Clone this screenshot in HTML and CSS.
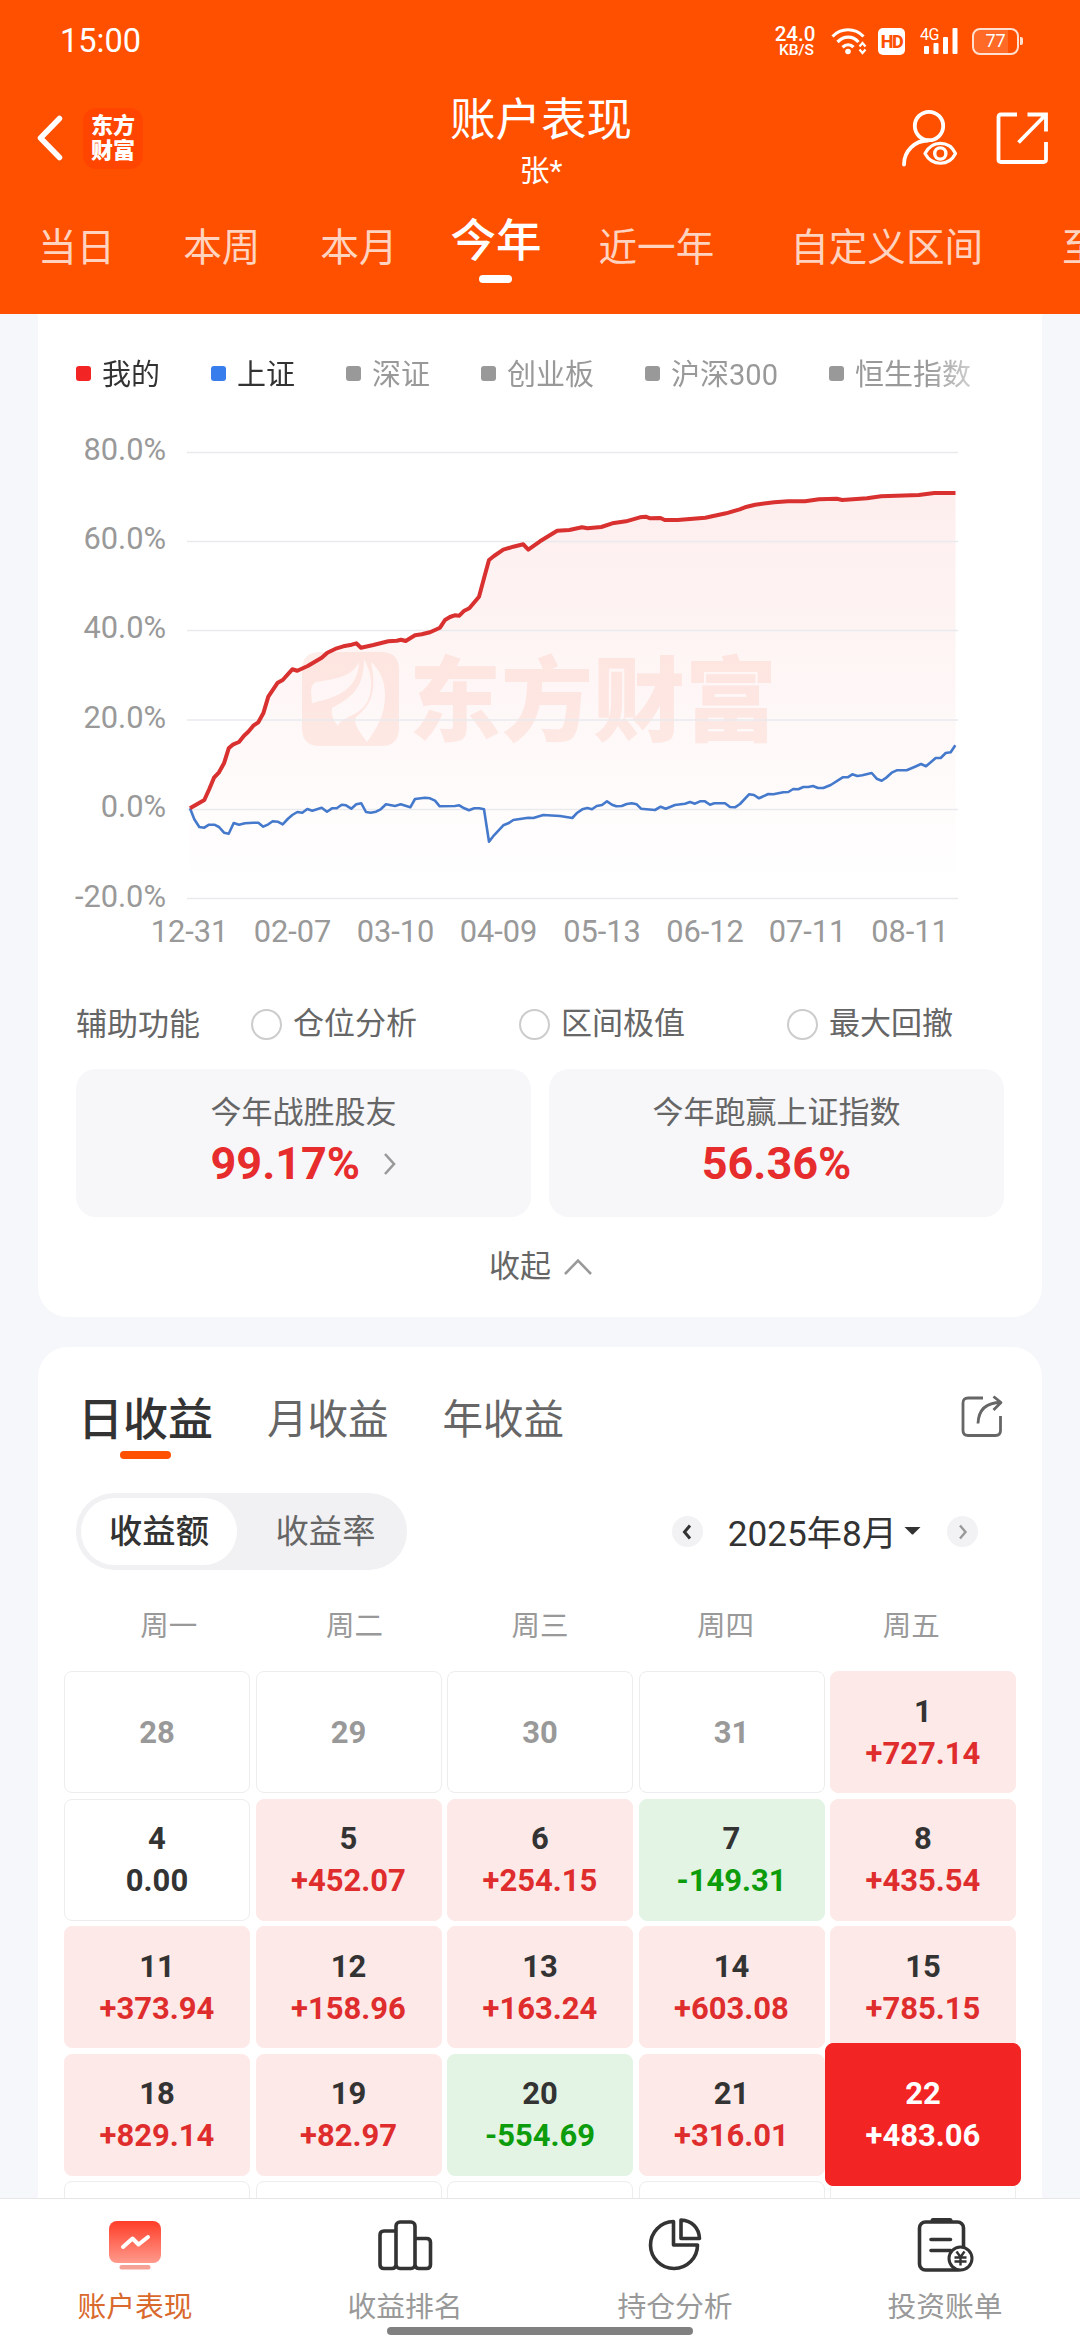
FILE: index.html
```html
<!DOCTYPE html>
<html lang="zh-CN">
<head>
<meta charset="utf-8">
<title>账户表现</title>
<link rel="stylesheet" href="styles.css">
</head>
<body>
<div class="screen">
  <header class="header">
    <div class="status">
      <span class="clock">15:00</span>
      <div class="status-icons">
        <div class="speed"><b>24.0</b><span>KB/S</span></div>
        <svg class="wifi" width="36" height="28" viewBox="0 0 36 28" fill="none" stroke="#fff" stroke-width="3.2">
          <path d="M1.5 9.5C10 .5 24 .5 32.500 9.500"/><path d="M6.500 15C13 8.500 21.500 8.500 27.500 15"/><path d="M11.500 20.200C15 17 19.500 17 22.500 20.200"/>
          <circle cx="17" cy="24.500" r="2.800" fill="#fff" stroke="none"/>
          <path d="M28.500 19.500l3-3.500 3 3.500M28.500 22.500l3 3.500 3-3.500" stroke-width="2.200"/>
        </svg>
        <span class="hd">HD</span>
        <div class="signal"><span>4G</span>
          <svg width="39" height="28" viewBox="0 0 39 28" fill="#fff"><rect x="4" y="19" width="5" height="8" rx="1"/><rect x="13.500" y="16" width="5" height="11" rx="1"/><rect x="23" y="10" width="5" height="17" rx="1"/><rect x="32.500" y="1" width="5" height="26" rx="1"/></svg>
        </div>
        <div class="battery"><span>77</span></div>
      </div>
    </div>
    <div class="titlebar">
      <div class="title-left">
        <svg width="26" height="46" viewBox="0 0 26 46" fill="none" stroke="#fff" stroke-width="5.500" stroke-linecap="round" stroke-linejoin="round"><path d="M22.500 3.500L3.500 23l19 19.500"/></svg>
        <div class="logo"><span>东方</span><span>财富</span></div>
      </div>
      <div class="title-center"><h1>账户表现</h1><p>张*</p></div>
      <div class="title-right">
        <svg width="57" height="58" viewBox="0 0 57 58" fill="none" stroke="#fff" stroke-width="3.800" stroke-linecap="round">
          <circle cx="28" cy="17" r="14.200"/><path d="M3 55.500C3 42 14 31.500 27 31.500"/>
          <path d="M24 44.500C31 31 48 31 54.500 44.500C48 57.500 31 57.500 24 44.500Z" stroke-linejoin="round" stroke-width="3.200"/><circle cx="39.300" cy="44.500" r="5.600" stroke-width="3.400"/>
        </svg>
        <svg width="53" height="54" viewBox="0 0 53 54" fill="none" stroke="#fff" stroke-width="3.800">
          <path d="M21 3.500H5Q2.500 3.500 2.500 6V48.500Q2.500 51 5 51H47.500Q50 51 50 48.500V31"/><path d="M31.500 3.500H50V20.500M49.500 4L22.500 31.500"/>
        </svg>
      </div>
    </div>
    <nav class="ranges">
      <span>当日</span><span class="r2">本周</span><span class="r3">本月</span><span class="r4 active">今年</span><span class="r5">近一年</span><span class="r6">自定义区间</span><span class="r7">至今</span>
    </nav>
  </header>

  <main class="content">
    <section class="card card-chart">
      <div class="legend">
        <span class="on"><i class="red"></i>我的</span><span class="on"><i class="blue"></i>上证</span><span><i></i>深证</span><span><i></i>创业板</span><span><i></i>沪深300</span><span><i></i>恒生指数</span>
      </div>
      <svg class="chart" width="1004" height="520" viewBox="38 430 1004 520">
        <defs><linearGradient id="area" gradientUnits="userSpaceOnUse" x1="0" y1="493" x2="0" y2="890"><stop offset="0" stop-color="#f02c2c" stop-opacity=".08"/><stop offset="1" stop-color="#f02c2c" stop-opacity="0"/></linearGradient></defs>
        <g class="watermark">
          <path fill-rule="evenodd" d="M320 652H381Q399 652 399 670V728Q399 746 381 746H320Q302 746 302 728V670Q302 652 320 652ZM359 662C352 677 335 679 316 682Q311 684 311 692L312 703C340 697 358 688 359 662ZM364 659C364 690 350 698 332 708C331 716 334 721 338 726C343 713 373 718 371 680C370 671 367 665 364 659ZM371 662C377 690 372 705 356 717C353 725 360 732 367 742C377 728 385 715 385 695C385 680 379 669 371 662Z"/>
          <text x="409" y="734">东方财富</text>
        </g>
        <path fill="url(#area)" d="M190 808.300L204.300 800 209.300 789 214 777.700 219 772.300 224 763.300 228.700 748.300 233.300 744.300 239 742 244 735.700 248.300 731.700 253.300 725.700 258.300 722.300 263.300 713.300 268.300 696.700 277.700 682.700 282.700 680 292.300 669.300 297.300 670.700 307.700 666 321.700 657.700 327.300 652.700 336.700 648.300 356.300 643.300 361 647.700 388.300 641.300 405.700 641 415 635.300 430 632.300 440 627.700 445 620 454.700 615.300 459.300 615.700 464.300 610.700 469.300 608.300 479 596.700 489 560 494 556 503.300 549.700 523.300 544.300 528.300 549.700 540 541.300 557.200 530.700 582 527.300 601.300 527 612.300 523.300 626 521.300 645.700 516.700 664.700 520 677.700 520 705.300 517.700 726 513.300 744.900 507.300 774.200 502.300 805 501.300 836.800 498.700 867 498.300 918.800 495 934.300 493 955.500 493V898H190Z"/>
        <path class="grid" d="M187 452.500H958M187 541.500H958M187 630.500H958M187 720H958M187 809.500H958M187 898.500H958"/>
        <polyline class="line-sse" points="190,808.3 194.3,819.3 199.3,827 204.3,827.7 209,824.7 214.3,824.7 219,827 224,832.7 228.7,833.7 233.7,823 239,824.7 245,823.3 253.3,822.7 258.3,822.7 263.3,826.7 268.3,824.3 272.7,821.3 277.7,821.7 282.7,824.3 287.7,819 292.3,815 297.3,812 302.3,812.7 307.3,809 312.3,810.7 321.7,807.7 327,811.7 332,808.3 336.7,808.3 341.7,804.7 346,805.3 351.3,808.7 356.3,804.3 361.3,803.3 366,812 370.7,812.7 376,811.7 380.7,809.3 386,804.3 395,806 400.7,804.3 410.3,807.3 415,799 425,797.7 430,798.3 435,800.7 439.7,806.3 455,806 459.3,805.3 464.3,808.3 469,810.3 474.3,808.3 479.3,808.3 484,809.3 489,841.7 494,835.3 503.3,825.3 508.3,823.3 513.3,820 528.3,817.7 533.3,818 543.3,815 560,816 572.3,818 577.3,812.7 582.3,809.3 587.3,808 592,809.3 596.7,806 602,805 607,801.3 612,804.7 616.3,806.3 621.7,806 626.7,804 631.7,803.3 636.7,804.3 641,808.7 655,810 660.7,806.7 665.7,808.7 675,805 685,803.7 690,802 695,803.7 700,801.3 705,801.3 710,804.7 714.3,803.3 725,803.3 730,807 735,807.3 740,804 749,794.3 754,795 759,798.3 768.3,794 773.3,794.3 783.3,792.3 788.3,792 793.3,789 798.3,789.3 803.3,787 808.3,787 813,786 818,788 823.3,788 830.7,785 842.7,777.3 847.7,777.3 852.3,774.3 857.3,776 862.3,775.3 871.7,773 876.7,778.7 881.7,780.7 886.7,777.3 891.7,772.7 896.7,770.3 906.7,770.3 915,766.7 921,764 926,766.3 935.7,758 940.7,758 945.7,753 950.7,752.3 955.3,745.3"/>
        <polyline class="line-mine" points="190,808.3 204.3,800 209.3,789 214,777.7 219,772.3 224,763.3 228.7,748.3 233.3,744.3 239,742 244,735.7 248.3,731.7 253.3,725.7 258.3,722.3 263.3,713.3 268.3,696.7 277.7,682.7 282.7,680 292.3,669.3 297.3,670.7 307.7,666 321.7,657.7 327.3,652.7 336.7,648.3 343.3,646.3 351.7,644.7 356.3,643.3 361,647.7 373.3,645 388.3,641.3 396.7,640.7 401,639.7 405.7,641 415,635.3 421.7,634.3 430,632.3 440,627.7 445,620 450,617 454.7,615.3 459.3,615.7 464.3,610.7 469.3,608.3 479,596.7 484,578.3 489,560 494,556 503.3,549.7 513.3,546.7 523.3,544.3 528.3,549.7 540,541.3 557.2,530.7 569.3,530 582,527.3 587.5,528.3 601.3,527 612.3,523.3 626,521.3 639.9,517.3 645.7,516.7 650.2,518.3 660.5,518 664.7,520 677.7,520 705.3,517.7 726,513.3 739.7,509.3 744.9,507.3 755.2,504.7 774.2,502.3 788,501.3 805,501.3 819,499.3 836.8,498.7 842.3,500 867,498.3 881,496.3 918.8,495 934.3,493 955.5,493"/>
        <g class="axis" text-anchor="end"><text x="166" y="460">80.0%</text><text x="166" y="549">60.0%</text><text x="166" y="638">40.0%</text><text x="166" y="728">20.0%</text><text x="166" y="817">0.0%</text><text x="166" y="907">-20.0%</text></g>
        <g class="axis" text-anchor="middle"><text x="189.500" y="942">12-31</text><text x="292.500" y="942">02-07</text><text x="395.500" y="942">03-10</text><text x="498.500" y="942">04-09</text><text x="602" y="942">05-13</text><text x="705" y="942">06-12</text><text x="807.500" y="942">07-11</text><text x="910" y="942">08-11</text></g>
      </svg>
      <div class="helpers"><b>辅助功能</b><span><i></i>仓位分析</span><span><i></i>区间极值</span><span><i></i>最大回撤</span></div>
      <div class="stats">
        <div class="stat"><div class="stat-body"><p>今年战胜股友</p><strong>99.17%<svg width="14" height="24" viewBox="0 0 14 24" fill="none" stroke="#999" stroke-width="2.600"><path d="M2 2l9 10-9 10"/></svg></strong></div></div>
        <div class="stat"><div class="stat-body center"><p>今年跑赢上证指数</p><strong>56.36%</strong></div></div>
      </div>
      <div class="fold">收起<svg width="30" height="18" viewBox="0 0 30 18" fill="none" stroke="#999" stroke-width="2.600"><path d="M2 16L15 2.500 28 16"/></svg></div>
    </section>

    <section class="card card-calendar">
      <div class="cal-tabs">
        <span class="active">日收益</span><span>月收益</span><span>年收益</span>
        <svg width="42" height="43" viewBox="0 0 42 43" fill="none" stroke="#666" stroke-width="2.800" stroke-linejoin="round"><path d="M22 3H7Q2 3 2 8V35.500Q2 40.500 7 40.500H34.500Q39.500 40.500 39.500 35.500V21"/><path d="M17 28.500C17.500 16 24 7.500 40 7.500M32.500 1.500L40 7.500 32.500 15"/></svg>
      </div>
      <div class="cal-tools">
        <div class="toggle"><span class="active">收益额</span><span>收益率</span></div>
        <div class="month">
          <i class="round dark"><svg width="10" height="16" viewBox="0 0 10 16" fill="none" stroke="#333" stroke-width="3"><path d="M8 1.500L2.500 8 8 14.500"/></svg></i>
          <span>2025年8月</span>
          <svg class="caret" width="17" height="8" viewBox="0 0 17 8"><path d="M.5 0H16.500L9.500 7Q8.500 8 7.500 7Z" fill="#333"/></svg>
          <i class="round"><svg width="10" height="16" viewBox="0 0 10 16" fill="none" stroke="#999" stroke-width="2.400"><path d="M2 1.500L7.500 8 2 14.500"/></svg></i>
        </div>
      </div>
      <div class="week"><span>周一</span><span>周二</span><span>周三</span><span>周四</span><span>周五</span></div>
      <div class="days">
        <div class="day out">28</div><div class="day out">29</div><div class="day out">30</div><div class="day out">31</div><div class="day up">1<em>+727.14</em></div>
        <div class="day">4<em>0.00</em></div><div class="day up">5<em>+452.07</em></div><div class="day up">6<em>+254.15</em></div><div class="day down">7<em>-149.31</em></div><div class="day up">8<em>+435.54</em></div>
        <div class="day up">11<em>+373.94</em></div><div class="day up">12<em>+158.96</em></div><div class="day up">13<em>+163.24</em></div><div class="day up">14<em>+603.08</em></div><div class="day up">15<em>+785.15</em></div>
        <div class="day up">18<em>+829.14</em></div><div class="day up">19<em>+82.97</em></div><div class="day down">20<em>-554.69</em></div><div class="day up">21<em>+316.01</em></div><div class="day selected">22<em>+483.06</em></div>
        <div class="day"></div><div class="day"></div><div class="day"></div><div class="day"></div><div class="day"></div>
      </div>
    </section>
  </main>

  <footer class="tabbar">
    <div class="tab active">
      <svg width="60" height="60" viewBox="0 0 60 60"><defs><linearGradient id="tv" x1="0" y1="0" x2="0" y2="1"><stop offset="0" stop-color="#ff3d28"/><stop offset="1" stop-color="#ff9a8c"/></linearGradient></defs><rect x="4" y="6" width="52" height="42" rx="8" fill="url(#tv)"/><rect x="14.500" y="50" width="31" height="4.500" rx="2" fill="#f5a196"/><path d="M18 32L27.500 23.500 33.500 29.500 43 22" fill="none" stroke="#fff" stroke-width="4" stroke-linecap="round" stroke-linejoin="round"/></svg>
      <span>账户表现</span></div>
    <div class="tab">
      <svg width="60" height="60" viewBox="0 0 60 60" fill="none" stroke="#333" stroke-width="3.600" stroke-linejoin="round"><path d="M20 16H9Q5 16 5 20V49.500Q5 53.500 9 53.500H17Q20.500 53.500 21 50"/><rect x="21" y="7" width="19" height="46.500" rx="4"/><path d="M40 23.500H51.500Q55.500 23.500 55.500 27.500V49.500Q55.500 53.500 51.500 53.500H44Q40.500 53.500 40 50"/></svg>
      <span>收益排名</span></div>
    <div class="tab">
      <svg width="60" height="60" viewBox="0 0 60 60" fill="none" stroke="#333" stroke-width="3.600" stroke-linejoin="round"><path d="M28.500 6.500A23.500 23.500 0 1 0 52.500 30H28.500Z"/><path d="M36 5V23.500H54.500C54 13 47 5.500 36 5Z"/></svg>
      <span>持仓分析</span></div>
    <div class="tab">
      <svg width="60" height="60" viewBox="0 0 60 60" fill="none" stroke="#333" stroke-width="3.600"><rect x="4.500" y="7" width="44" height="48" rx="6"/><path d="M18 5.500H35" stroke-width="5" stroke-linecap="round"/><path d="M16 24.500H35.500M16 35.500H35.500" stroke-linecap="round"/><circle cx="45.500" cy="43.500" r="11.500" fill="#fff" stroke-width="3"/><path d="M41.500 36.500L45.500 42 49.500 36.500M45.500 42V50.500M39.500 42.500H51.500M39.500 46.500H51.500" stroke-width="2.400"/></svg>
      <span>投资账单</span></div>
    <i class="home"></i>
  </footer>
</div>
</body>
</html>
```
FILE: styles.css
```css
* { box-sizing: border-box; margin: 0; padding: 0; }
body { background: #f6f7fa; font-family: Roboto, "Noto Sans CJK SC", sans-serif; color: #333; }
i, em { font-style: normal; }
svg { display: block; flex: none; }
.screen { width: 1080px; height: 2340px; display: flex; flex-direction: column; overflow: hidden; }

.header { flex: none; height: 314px; background: #ff5000; color: #fff; overflow: hidden; }
.status { height: 93px; display: flex; justify-content: space-between; padding: 26px 61px 0 60px; }
.clock { font-size: 32.500px; line-height: 30px; }
.status-icons { display: flex; height: 30px; align-items: center; }
.speed { width: 42px; display: flex; flex-direction: column; align-items: center; font-weight: 500; }
.speed b { font-size: 20.500px; line-height: 18px; font-weight: 500; }
.speed span { font-size: 15.500px; line-height: 14px; padding-left: 3px; }
.wifi { margin-left: 15px; }
.hd { width: 27px; height: 27px; margin-left: 11px; border-radius: 5px; background: #fff; color: #ff5000; font-size: 18px; line-height: 27px; font-weight: 800; text-align: center; letter-spacing: -1.500px; }
.signal { position: relative; margin-left: 15px; }
.signal span { position: absolute; left: 0; top: 1px; font-size: 16px; line-height: 14px; letter-spacing: -.5px; }
.battery { position: relative; width: 47px; height: 27px; margin-left: 13px; border: 2.500px solid #ffe0d0; border-radius: 8px; text-align: center; font-size: 18px; line-height: 22px; background: linear-gradient(90deg, rgba(255,255,255,.15) 80%, transparent 80%); }
.battery::after { content: ""; position: absolute; right: -6px; top: 7px; width: 3px; height: 8px; border-radius: 0 2px 2px 0; background: #ffe0d0; }

.titlebar { height: 90px; display: grid; grid-template-columns: 1fr auto 1fr; grid-template-rows: 90px; padding: 0 31px 0 37px; }
.title-left { display: flex; align-items: center; gap: 20px; }
.logo { width: 60px; height: 61px; border-radius: 13px; background: #ff4500; padding-top: 5px; font-size: 22px; line-height: 25px; font-weight: 900; text-align: center; }
.logo span { display: block; }
.title-center { text-align: center; padding-top: 2px; margin-right: 4px; }
.title-center h1 { font-size: 45.500px; line-height: 52px; font-weight: 400; }
.title-center p { font-size: 30px; line-height: 38px; margin-top: 5px; }
.title-right { display: flex; justify-content: flex-end; align-items: center; gap: 38px; }

.ranges { display: flex; padding: 40px 0 0 38px; font-size: 38.600px; line-height: 50px; color: #ffd3bf; white-space: nowrap; }
.ranges span { flex: none; }
.r2 { margin-left: 68px; }
.r3 { margin-left: 60px; }
.r4 { margin-left: 53px; }
.r5 { margin-left: 57px; }
.r6 { margin-left: 76px; }
.r7 { margin-left: 79px; }
.ranges .active { position: relative; margin-top: -6px; font-size: 45.500px; font-weight: 500; color: #fff; }
.ranges .active::after { content: ""; position: absolute; left: 29px; top: 58px; width: 33px; height: 8px; border-radius: 4px; background: #fff; }

.content { flex: 1; min-height: 0; overflow: hidden; padding: 0 38px; display: flex; flex-direction: column; gap: 30px; }
.card { flex: none; background: #fff; border-radius: 30px; }
.card-chart { height: 1003px; border-top-left-radius: 0; border-top-right-radius: 0; padding-top: 45px; }
.legend { display: flex; gap: 51px; padding-left: 38px; height: 32px; width: 940px; overflow: hidden; font-size: 29px; line-height: 32px; color: #999; white-space: nowrap; -webkit-mask-image: linear-gradient(90deg, #000 890px, rgba(0,0,0,.45) 935px); mask-image: linear-gradient(90deg, #000 890px, rgba(0,0,0,.45) 935px); }
.legend span { display: flex; align-items: center; gap: 11px; }
.legend i { width: 15px; height: 15px; border-radius: 3px; background: #999; margin-top: -4px; }
.legend .on { color: #333; }
.legend .red { background: #f32424; }
.legend .blue { background: #377dec; }
.chart { margin-top: 39px; }
.grid { stroke: #e9eaee; stroke-width: 1.500; fill: none; }
.line-sse { fill: none; stroke: #4479cb; stroke-width: 2.600; stroke-linejoin: round; }
.line-mine { fill: none; stroke: #d93030; stroke-width: 4; stroke-linejoin: round; }
.axis { font-size: 30.800px; fill: #999; }
.watermark { fill: #feeee9; font-size: 92px; font-weight: 900; }
.helpers { display: flex; align-items: center; height: 32px; margin: 58px 0 0 38px; font-size: 31px; line-height: 32px; color: #666; }
.helpers b { font-weight: 400; width: 175px; flex: none; padding-top: 2px; }
.helpers span { display: flex; align-items: center; flex: none; width: 268px; gap: 11px; }
.helpers i { width: 31px; height: 31px; border: 2.500px solid #ccc; border-radius: 50%; }
.stats { display: grid; grid-template-columns: 1fr 1fr; gap: 18px; padding: 0 38px; margin-top: 29px; }
.stat { height: 148px; background: #f7f7fa; border-radius: 20px; display: flex; justify-content: center; padding-top: 25px; }
.stat p { font-size: 31px; line-height: 38px; color: #666; }
.stat strong { display: flex; align-items: center; justify-content: space-between; font-size: 45px; line-height: 52px; margin-top: 6px; font-weight: 700; color: #e62c2c; }
.stat .center { text-align: center; }
.stat .center strong { justify-content: center; }
.fold { display: flex; justify-content: center; align-items: center; gap: 12px; margin-top: 30px; padding-left: 2px; font-size: 31px; line-height: 40px; color: #666; }

.card-calendar { height: 920px; padding-top: 39px; }
.cal-tabs { display: flex; align-items: center; height: 60px; padding: 0 39px 0 40px; font-size: 40.500px; color: #666; }
.cal-tabs span { margin-right: 54px; }
.cal-tabs .active { position: relative; font-size: 45px; font-weight: 500; color: #333; margin-right: 54px; }
.cal-tabs .active::after { content: ""; position: absolute; left: 42px; bottom: -10px; width: 51px; height: 8px; border-radius: 4px; background: #ff5000; }
.cal-tabs svg { margin-left: auto; }
.cal-tools { display: flex; align-items: center; justify-content: space-between; height: 77px; margin: 47px 64px 0 38px; }
.toggle { display: flex; width: 331px; height: 77px; padding: 5px; border-radius: 38px; background: #f1f1f4; font-size: 33.300px; line-height: 68px; color: #666; text-align: center; }
.toggle span { flex: none; width: 177px; }
.toggle .active { width: 156px; height: 67px; background: #fff; border-radius: 34px; color: #333; font-weight: 500; }
.month { display: flex; align-items: center; font-size: 35.200px; }
.month span { margin: -3px 0 0 25px; }
.caret { margin: -2px 26px 0 7px; }
.round { width: 31px; height: 31px; border-radius: 50%; background: #f2f2f4; display: flex; align-items: center; justify-content: center; }
.week { display: grid; grid-template-columns: repeat(5, 1fr); margin: 37px 38px 0; text-align: center; font-size: 28.500px; line-height: 40px; color: #999; }
.days { display: grid; grid-template-columns: repeat(5, 186px); grid-auto-rows: 122px; justify-content: space-between; row-gap: 5.600px; margin: 24px 26px 0; }
.day { border: 1.500px solid #ededed; border-radius: 8px; display: flex; flex-direction: column; align-items: center; justify-content: center; padding-top: 1px; font-size: 31px; line-height: 42px; font-weight: 700; }
.out { color: #999; }
.up { background: #fde9e8; border-color: #fde9e8; }
.up em { color: #df2d2d; }
.down { background: #e3f4e4; border-color: #e3f4e4; }
.down em { color: #0c9c0c; }
.selected { z-index: 1; margin: -11px -5px -10px; background: #f32424; border-color: #f32424; color: #fff; }

.tabbar { flex: none; position: relative; height: 142px; display: grid; grid-template-columns: repeat(4, 1fr); background: #fff; border-top: 1px solid #e6e6e6; }
.tab { display: flex; flex-direction: column; align-items: center; padding-top: 16px; font-size: 28.800px; line-height: 36px; color: #999; }
.tab span { margin-top: 14px; }
.tab.active { color: #d9692c; }
.home { position: absolute; left: 387px; bottom: 5px; width: 306px; height: 8px; border-radius: 4px; background: #808080; }
```
